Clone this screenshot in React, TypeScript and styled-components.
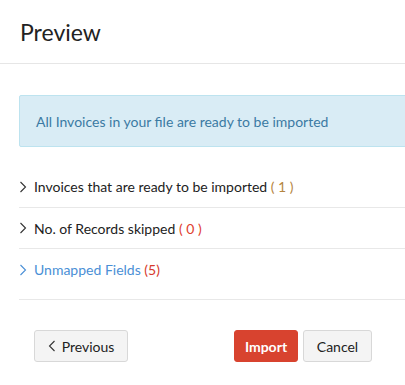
import { FC } from "react";
import styled, { createGlobalStyle } from "styled-components";

const Global = createGlobalStyle`
  body {
    margin: 0;
    background: #fff;
    font-family: "Lato", "Open Sans", sans-serif;
    color: #222;
  }
`;

const Page = styled.div`
  width: 405px;
  overflow: hidden;
`;

const Header = styled.div`
  height: 64px;
  display: flex;
  align-items: center;
  padding: 0 20px;
  border-bottom: 1px solid #e6e6e6;
  box-sizing: border-box;
`;

const Title = styled.h1`
  margin: 0;
  font-size: 23px;
  font-weight: 400;
  color: #222;
`;

const Body = styled.div`
  padding: 31px 0 0 19px;
`;

const Alert = styled.div`
  width: 420px;
  height: 52px;
  box-sizing: border-box;
  display: flex;
  align-items: center;
  padding-left: 16px;
  background: #d9ecf5;
  border: 1px solid #bde3ef;
  border-radius: 2px;
  color: #3b7aa3;
  font-size: 14px;
`;

const List = styled.div`
  margin-top: 19px;
`;

const Row = styled.div<{ $height: number; $bottom?: number }>`
  height: ${p => p.$height}px;
  box-sizing: border-box;
  display: flex;
  align-items: center;
  padding-bottom: ${p => p.$bottom ?? 0}px;
  gap: 7px;
  border-bottom: 1px solid #e8e8e8;
  font-size: 14px;
`;

const Label = styled.span<{ $link?: boolean }>`
  color: ${p => (p.$link ? "#4a8fd6" : "#222")};
`;

const Count = styled.span<{ $color: string }>`
  color: ${p => p.$color};
`;

const Footer = styled.div`
  display: flex;
  align-items: center;
  gap: 5px;
  padding: 30px 0 0 34px;
`;

const Button = styled.button<{ $primary?: boolean; $width: number }>`
  width: ${p => p.$width}px;
  height: 32px;
  box-sizing: border-box;
  display: inline-flex;
  align-items: center;
  justify-content: center;
  gap: 6px;
  padding: 0;
  font-family: inherit;
  font-size: 14px;
  border-radius: 3px;
  border: 1px solid ${p => (p.$primary ? "#d8432f" : "#d8d8d8")};
  background: ${p => (p.$primary ? "#d8432f" : "#f4f4f4")};
  color: ${p => (p.$primary ? "#fff" : "#222")};
  font-weight: ${p => (p.$primary ? 700 : 400)};
`;

const Spacer = styled.div`
  width: 96px;
`;

const Chevron: FC<{ color: string; left?: boolean }> = ({ color, left }) => (
  <svg width="8" height="12" viewBox="0 0 8 12">
    <path
      d={left ? "M6.5 1 L1.5 6 L6.5 11" : "M1.5 1 L6.5 6 L1.5 11"}
      fill="none"
      stroke={color}
      strokeWidth="1.1"
    />
  </svg>
);

const App: FC = () => (
  <Page>
    <Global />
    <Header>
      <Title>Preview</Title>
    </Header>
    <Body>
      <Alert>All Invoices in your file are ready to be imported</Alert>
      <List>
        <Row $height={42}>
          <Chevron color="#333" />
          <Label>
            Invoices that are ready to be imported <Count $color="#b5853f">( 1 )</Count>
          </Label>
        </Row>
        <Row $height={41}>
          <Chevron color="#333" />
          <Label>
            No. of Records skipped <Count $color="#e0402f">( 0 )</Count>
          </Label>
        </Row>
        <Row $height={51} $bottom={9}>
          <Chevron color="#4a8fd6" />
          <Label $link>
            Unmapped Fields <Count $color="#d63a2c">(5)</Count>
          </Label>
        </Row>
      </List>
    </Body>
    <Footer>
      <Button $width={94}>
        <Chevron color="#333" left />
        Previous
      </Button>
      <Spacer />
      <Button $primary $width={64}>Import</Button>
      <Button $width={69}>Cancel</Button>
    </Footer>
  </Page>
);

export default App;
